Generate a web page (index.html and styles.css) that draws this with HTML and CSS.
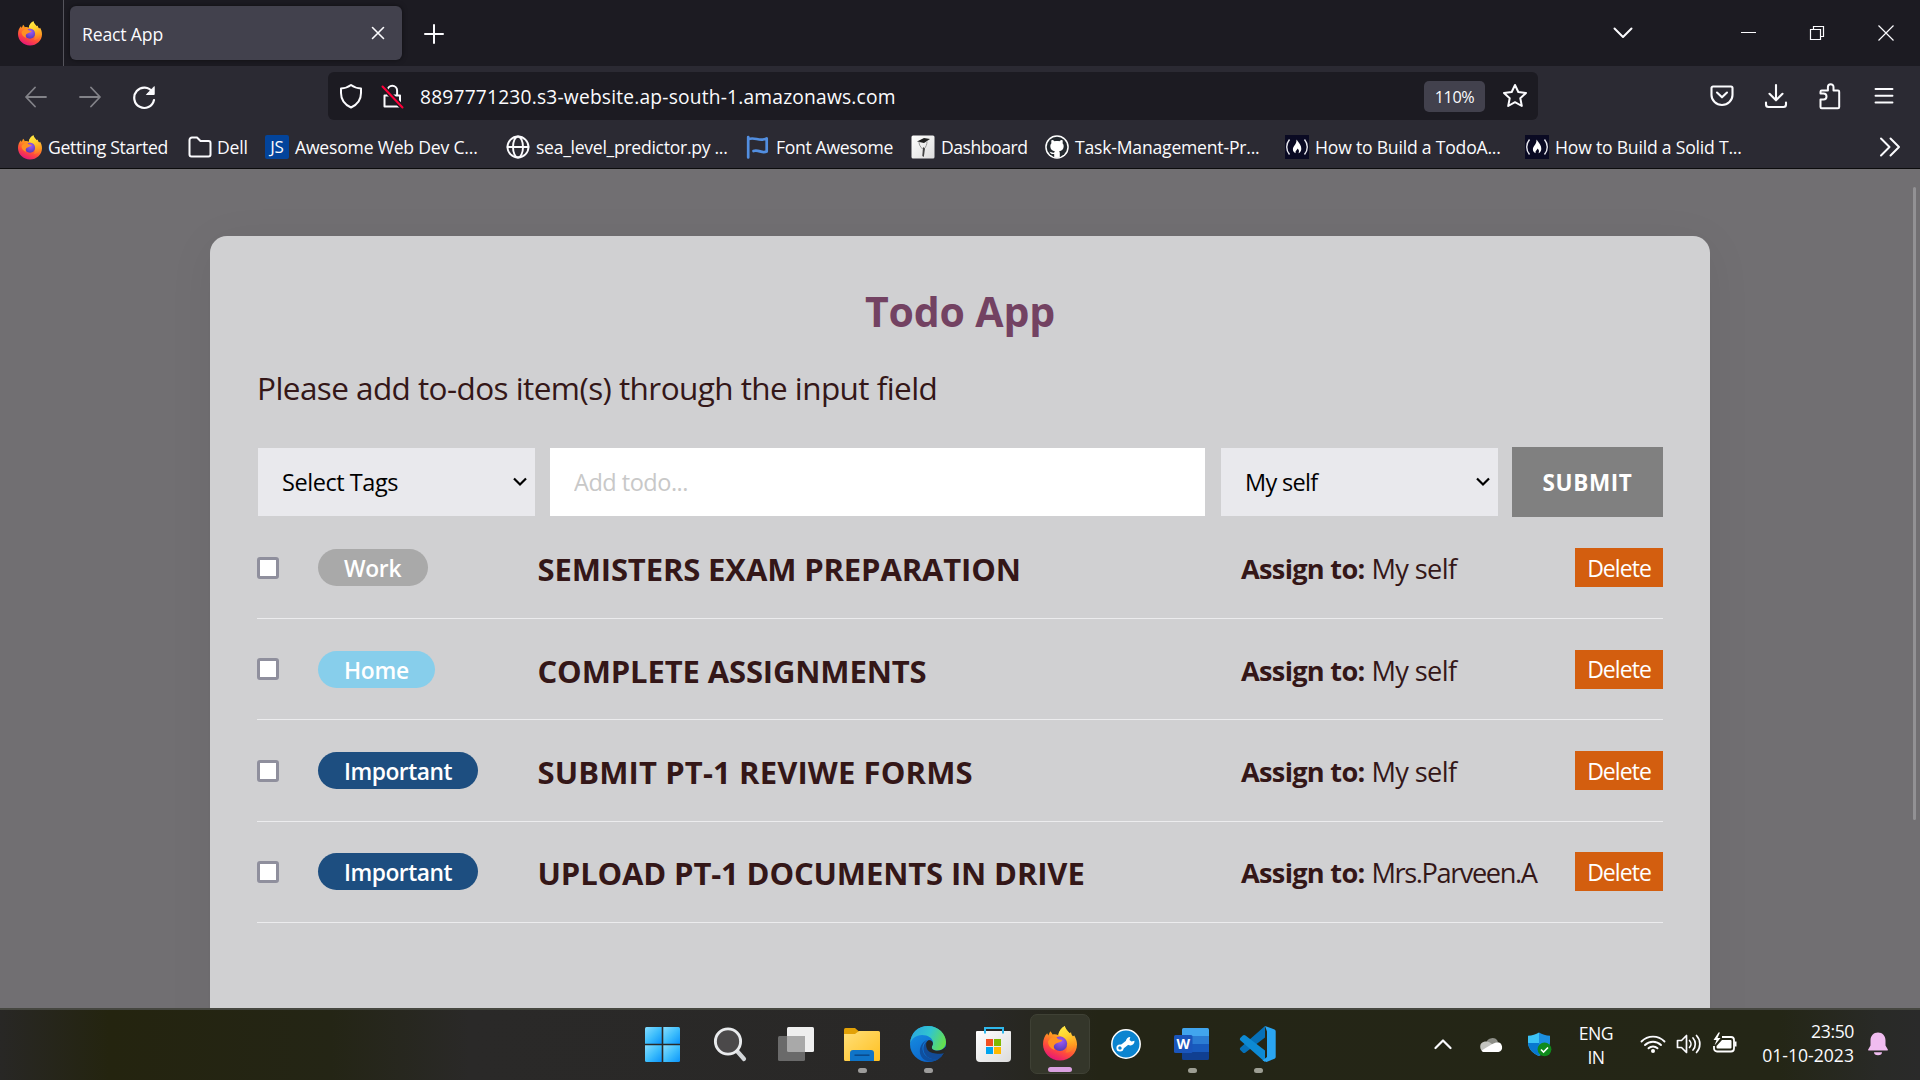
FILE: index.html
```html
<!DOCTYPE html>
<html lang="en">
<head>
<meta charset="utf-8">
<title>React App</title>
<link rel="stylesheet" href="styles.css">
</head>
<body>
<svg class="defs" width="0" height="0" aria-hidden="true">
  <defs>
    <linearGradient id="ffBody" x1=".8" y1="0" x2=".35" y2="1"><stop offset="0" stop-color="#ffe14a"/><stop offset=".4" stop-color="#ff9a1f"/><stop offset=".72" stop-color="#ff4a3d"/><stop offset="1" stop-color="#e6157a"/></linearGradient>
    <linearGradient id="ffFlame" x1="0" y1="0" x2=".3" y2="1"><stop offset="0" stop-color="#fff04a"/><stop offset=".5" stop-color="#ffd02c"/><stop offset="1" stop-color="#ff9a1f" stop-opacity=".4"/></linearGradient>
    <radialGradient id="ffCore" cx=".55" cy=".3" r=".75"><stop offset="0" stop-color="#a35cf5"/><stop offset="1" stop-color="#5038b4"/></radialGradient>
    <linearGradient id="win" x1="0" y1="0" x2="1" y2="1"><stop offset="0" stop-color="#85dcff"/><stop offset=".5" stop-color="#40bffc"/><stop offset="1" stop-color="#0a94fb"/></linearGradient>
    <linearGradient id="folderG" x1="0" y1="0" x2="1" y2="1"><stop offset="0" stop-color="#ffdf78"/><stop offset="1" stop-color="#ffc021"/></linearGradient>
    <linearGradient id="edgeTop" x1="0" y1=".3" x2="1" y2=".6"><stop offset="0" stop-color="#2aa7e0"/><stop offset=".5" stop-color="#31c5cf"/><stop offset="1" stop-color="#66e04a"/></linearGradient>
    <linearGradient id="edgeBody" x1="0" y1="0" x2=".6" y2="1"><stop offset="0" stop-color="#1795e6"/><stop offset="1" stop-color="#0c62c9"/></linearGradient>
    <linearGradient id="paper" x1="0" y1="0" x2="1" y2="1"><stop offset="0" stop-color="#fff"/><stop offset="1" stop-color="#dcdcdc"/></linearGradient>
    <linearGradient id="shieldG" x1="0" y1="0" x2="1" y2="0"><stop offset=".5" stop-color="#3cc3f5"/><stop offset=".5" stop-color="#1c8fe0"/></linearGradient>
    <symbol id="firefox" viewBox="0 0 34 35">
      <path d="M17 34.500C7.600 34.500 0 27.300 0 18.300C0 13.500 1.600 9.700 4.200 7.200L5.300 9.600L7.200 5.200C8.300 6.200 9 7.300 9.600 8.600C11.500 8 13.500 8.200 15.300 9.200C15.800 5.600 18 2 21.800 0C22.300 3.400 24.500 5 26.500 7.200L28 6.200C28.300 8 28.800 9.200 30 10.300L31.300 9.500C33 12.300 34 15.400 34 18.500C34 27.300 26.400 34.500 17 34.500Z" fill="url(#ffBody)"/>
      <path d="M15.300 9.200C15.800 5.600 18 2 21.800 0C22.300 5 31.500 8.500 31.200 18C31 23.500 27 27 22.500 26.500C26 21 24.500 12 15.300 9.200Z" fill="url(#ffFlame)"/>
      <circle cx="17" cy="17.800" r="7.200" fill="url(#ffCore)"/>
      <path d="M5 15.500C7 12 10 10.600 13.500 11.200C14.500 13.400 16.500 13.800 19.400 14C18.500 16 16 16 14.200 17C10.500 18.300 10 21 12 24C7.500 22.800 5 19.500 5 15.500Z" fill="#ff9123"/>
    </symbol>
    <symbol id="fcc" viewBox="0 0 24 24">
      <rect width="24" height="24" fill="#0a0a23"/>
      <path d="M4.500 4.500C.8 9 .8 15 4.500 19.500M19.500 4.500C23.200 9 23.200 15 19.500 19.500" fill="none" stroke="#e8e8ee" stroke-width="1.400"/>
      <path d="M11.500 4.500C14 8 16.500 10.500 16.300 14C16.200 16.200 15 17.700 13.500 18.300C14.500 16.300 14 14.700 12.500 13.500C12.300 15.300 10 15.500 10.700 18.300C8.700 17.500 7.800 16 7.900 14C8 11 11.700 9.500 11.500 4.500Z" fill="#fff"/>
    </symbol>
  </defs>
</svg>

<div class="screen">
  <header class="tabbar">
    <div class="pinned"><svg width="24" height="25"><use href="#firefox"/></svg></div>
    <div class="tab">
      <span class="tab-title">React App</span>
      <svg class="line" width="14" height="14" viewBox="0 0 14 14"><path d="M1.500 1.500l11 11M12.500 1.500l-11 11"/></svg>
    </div>
    <svg class="line newtab" width="20" height="20" viewBox="0 0 20 20"><path d="M10 1v18M1 10h18" stroke-width="2"/></svg>
    <div class="winctl">
      <svg class="line" width="20" height="12" viewBox="0 0 20 12"><path d="M1.500 1.500L10 10l8.500-8.500" stroke-width="2"/></svg>
      <svg class="line sharp" width="16" height="16" viewBox="0 0 16 16"><path d="M0 7.500h15" stroke-width="1"/></svg>
      <svg class="line sharp" width="16" height="16" viewBox="0 0 16 16"><path d="M1.500 4.500h10v10h-10zM4.500 4V1.500h10v10H12" stroke-width="1.200"/></svg>
      <svg class="line sharp" width="18" height="18" viewBox="0 0 18 18"><path d="M1.500 1.500l15 15M16.500 1.500l-15 15" stroke-width="1.200"/></svg>
    </div>
  </header>

  <nav class="toolbar">
    <button class="tool dim"><svg class="line" width="24" height="24" viewBox="0 0 24 24"><path d="M22 13H2.500M11 3.500L2 13l9 9.500" stroke-width="1.800"/></svg></button>
    <button class="tool dim"><svg class="line" width="24" height="24" viewBox="0 0 24 24"><path d="M2 13h19.500M13 3.500l9 9.500-9 9.500" stroke-width="1.800"/></svg></button>
    <button class="tool"><svg class="line reload" width="26" height="26" viewBox="0 0 26 26"><path d="M21.500 8A10 10.200 0 1 0 23 16" stroke-width="2.200"/><path d="M23.200 3v7.500H15.800z" fill="#fbfbfe" stroke-width="1"/></svg></button>
    <div class="urlbar">
      <svg class="line" width="24" height="26" viewBox="0 0 24 26"><path d="M12 2C9 4.300 5.500 5.300 2 5.500V10C2 17 6.500 22 12 24.500C17.500 22 22 17 22 10V5.500C18.500 5.300 15 4.300 12 2Z" stroke-width="2"/></svg>
      <svg class="line lock" width="24" height="26" viewBox="0 0 24 26"><path d="M3.500 12.500h15.500v11H3.500zM6.500 12V7.500a4.800 4.800 0 0 1 9.600 0V12" stroke-width="2"/><path d="M1.500 3.500l20 21" stroke="#1c1b22" stroke-width="5"/><path d="M1.500 3.500l20 21" stroke="#ff0039" stroke-width="2"/></svg>
      <span class="url">8897771230.s3-website.ap-south-1.amazonaws.com</span>
      <span class="zoom">110%</span>
      <svg class="line" width="26" height="26" viewBox="0 0 26 26"><path d="M13 2l3.300 7 7.700.9-5.700 5.300 1.500 7.800L13 19.200 6.200 23l1.500-7.800L2 9.900 9.700 9z" stroke-width="2"/></svg>
    </div>
    <div class="tools-right">
      <button class="tool"><svg class="line" width="24" height="22" viewBox="0 0 24 22"><path d="M3 1.500h18a1.500 1.500 0 0 1 1.500 1.500v7a10.500 10 0 0 1-21 0V3A1.500 1.500 0 0 1 3 1.500zM7 7.500l5 4.800 5-4.800" stroke-width="2.100"/></svg></button>
      <button class="tool"><svg class="line" width="24" height="26" viewBox="0 0 24 26"><path d="M12 2v15M5.500 10.800L12 17.300l6.500-6.500M2 19.500v2a2.500 2.500 0 0 0 2.500 2.500h15a2.500 2.500 0 0 0 2.500-2.500v-2" stroke-width="2.100"/></svg></button>
      <button class="tool"><svg class="line" width="24" height="28" viewBox="0 0 24 28"><path d="M2.500 17.500v7.500a1.200 1.200 0 0 0 1.200 1.200H20a1.200 1.200 0 0 0 1.200-1.200V9.700A1.200 1.200 0 0 0 20 8.500H15.500V5a2.800 2.800 0 0 0-5.600 0v3.500H3.700A1.200 1.200 0 0 0 2.500 9.700V11.500H5.500a3 3 0 0 1 0 6z" stroke-width="2"/></svg></button>
      <button class="tool"><svg class="line" width="20" height="18" viewBox="0 0 20 18"><path d="M1.500 2h17M1.500 8.700h17M1.500 15.500h17" stroke-width="1.900"/></svg></button>
    </div>
  </nav>

  <div class="bookmarks">
    <div class="bm"><svg width="24" height="25"><use href="#firefox"/></svg><span class="t1">Getting Started</span></div>
    <div class="bm"><svg class="line" width="24" height="24" viewBox="0 0 24 24"><path d="M4 2.500h5l3.500 3.500H20.500A2 2 0 0 1 22.500 8v11.500a2 2 0 0 1-2 2H3.500a2 2 0 0 1-2-2V5A2.500 2.500 0 0 1 4 2.500z" stroke-width="2"/></svg><span class="t2">Dell</span></div>
    <div class="bm"><span class="js">JS</span><span>Awesome Web Dev C...</span></div>
    <div class="bm"><svg class="line" width="24" height="24" viewBox="0 0 24 24"><circle cx="12" cy="12" r="10.500" stroke-width="1.900"/><ellipse cx="12" cy="12" rx="5" ry="10.500" stroke-width="1.900"/><path d="M1.500 12h21" stroke-width="1.900"/></svg><span class="t4">sea_level_predictor.py ...</span></div>
    <div class="bm"><svg width="24" height="24" viewBox="0 0 24 24" fill="none" stroke="#528ee0" stroke-width="2.700" stroke-linecap="round" stroke-linejoin="round"><path d="M2.200 2v20.500M2.500 4.200C8.500 1.500 13.500 7 20.700 3.500V16.500C16 19 12.500 14 7.500 16"/></svg><span class="t5">Font Awesome</span></div>
    <div class="bm"><svg width="24" height="24" viewBox="0 0 24 24"><rect x=".5" y=".5" width="23" height="23" rx="1.500" fill="url(#paper)"/><path d="M6 6.500l7-3.500 6 1-6 4z" fill="#222"/><path d="M8 6.500c0 4 1.500 5 3.500 7.500M16 6.500c0 3-1 5-2.500 7" fill="none" stroke="#999" stroke-width="1"/><path d="M12 12l2 1.500-1.200 8.500-1.500-1z" fill="#444"/></svg><span class="t6">Dashboard</span></div>
    <div class="bm"><svg width="24" height="24" viewBox="0 0 24 24"><circle cx="12" cy="12" r="11.800" fill="#fff"/><circle cx="12" cy="12" r="10.300" fill="#24292f"/><path d="M9.200 22V19C6 19.600 5.500 17.500 4.500 16.700C6.300 16.400 7 18.300 9.300 17.500C9.400 17 9.600 16.600 9.900 16.300C7.200 16 5.300 14.500 5.300 11.300C5.300 9.900 5.700 9 6.400 8.200C6.100 7 6.200 6 6.600 5C7.800 5 8.800 5.600 9.600 6.200C11.200 5.800 12.800 5.800 14.400 6.200C15.200 5.600 16.200 5 17.400 5C17.800 6 17.900 7 17.600 8.200C18.300 9 18.700 9.900 18.700 11.300C18.700 14.500 16.800 16 14.100 16.300C14.600 16.800 14.800 17.400 14.800 18.300V22C13 23 11 23 9.200 22Z" fill="#fff"/></svg><span>Task-Management-Pr...</span></div>
    <div class="bm"><svg width="24" height="24"><use href="#fcc"/></svg><span>How to Build a TodoA...</span></div>
    <div class="bm"><svg width="24" height="24"><use href="#fcc"/></svg><span>How to Build a Solid T...</span></div>
    <svg class="line more" width="22" height="20" viewBox="0 0 22 20"><path d="M2 1.500l8.500 8.500L2 18.500M11.500 1.500L20 10l-8.500 8.500" stroke-width="2"/></svg>
  </div>

  <main class="page">
    <section class="card">
      <h1>Todo App</h1>
      <p class="intro">Please add to-dos item(s) through the input field</p>
      <form class="form">
        <div class="select"><span>Select Tags</span><svg width="16" height="12" viewBox="0 0 16 12"><path d="M2 2.500l6 6 6-6"/></svg></div>
        <input class="field" type="text" placeholder="Add todo...">
        <div class="select second"><span class="self">My self</span><svg width="16" height="12" viewBox="0 0 16 12"><path d="M2 2.500l6 6 6-6"/></svg></div>
        <button class="submit" type="button">SUBMIT</button>
      </form>
      <ul class="todos">
        <li><i class="check"></i><span class="tag work">Work</span><span class="name">SEMISTERS EXAM PREPARATION</span><span class="assign"><b>Assign to:</b><span>My self</span></span><button class="delete">Delete</button></li>
        <li><i class="check"></i><span class="tag home">Home</span><span class="name">COMPLETE ASSIGNMENTS</span><span class="assign"><b>Assign to:</b><span>My self</span></span><button class="delete">Delete</button></li>
        <li><i class="check"></i><span class="tag important">Important</span><span class="name wide">SUBMIT PT-1 REVIWE FORMS</span><span class="assign"><b>Assign to:</b><span>My self</span></span><button class="delete">Delete</button></li>
        <li><i class="check"></i><span class="tag important">Important</span><span class="name">UPLOAD PT-1 DOCUMENTS IN DRIVE</span><span class="assign"><b>Assign to:</b><span class="long">Mrs.Parveen.A</span></span><button class="delete">Delete</button></li>
      </ul>
    </section>
    <div class="scrollbar"></div>
  </main>

  <footer class="taskbar">
    <div class="apps">
      <svg viewBox="0 0 66 70"><g fill="url(#win)"><path d="M14 18.500a1.500 1.500 0 0 1 1.500-1.500H30.700v16.700H14z"/><path d="M32.300 17H47.500a1.500 1.500 0 0 1 1.500 1.500V33.700H32.300z"/><path d="M14 35.300h16.700V52H15.500a1.500 1.500 0 0 1-1.500-1.500z"/><path d="M32.300 35.300H49V50.500a1.500 1.500 0 0 1-1.500 1.500H32.300z"/></g></svg>
      <svg viewBox="0 0 66 70"><path d="M40 41l7 8" stroke="#d3d6d9" stroke-width="4.200" stroke-linecap="round"/><circle cx="31" cy="31.500" r="12.600" fill="#4b494a" stroke="#e9ebed" stroke-width="2.900"/></svg>
      <svg viewBox="-1 0 66 70"><rect x="23" y="17" width="27" height="25" rx="1.500" fill="#efefef"/><rect x="14" y="26" width="27" height="25" rx="1.500" fill="#6a6a6a"/><path d="M23 26h18v16H24.500a1.500 1.500 0 0 1-1.500-1.500z" fill="#a9a9a9"/></svg>
      <svg viewBox="-2 0 66 70"><path d="M13 19.500a1.500 1.500 0 0 1 1.500-1.500H24l4 3.500-4 4.500H13z" fill="#e2a106"/><path d="M13 24h11l4-3H47.500a1.500 1.500 0 0 1 1.500 1.500V49.500a1.500 1.500 0 0 1-1.500 1.500h-33a1.500 1.500 0 0 1-1.500-1.500z" fill="url(#folderG)"/><path d="M19 51V43a3 3 0 0 1 3-3H40a3 3 0 0 1 3 3v8z" fill="#0f74c8"/><path d="M23.500 45.200h15" stroke="#0a4a8c" stroke-width="1.600"/><rect x="27" y="58" width="9" height="5" rx="2.500" fill="#9d9c9b"/></svg>
      <svg viewBox="-2 0 66 70"><circle cx="31" cy="34" r="18" fill="url(#edgeBody)"/><path d="M13 34C14 22 21 16 31 16C41.500 16 49 24 49 32C49 38 44.500 40.500 40 40.500C36 40.500 34 38.800 34.500 37C35.200 35.500 36 34.500 36 32.500C36 28.500 31 25 25 25C19 25 14.500 28.500 13 34Z" fill="url(#edgeTop)"/><path d="M30.500 30C26 32.500 24.500 37 26 41.500C28 48 36 51 43 48C37 53.500 27.500 52.500 24 46C20.800 39.500 24.500 31.500 30.500 30Z" fill="#0f4f9e"/><path d="M34.300 37C34 39 36 41 40 41C44 41 46 39.500 48 38C47.500 43 45 46.500 42.500 48.300C35 51 27.500 47 26.500 40C26 34 29.500 30.500 33 30C36 31 36 34.500 34.300 37Z" fill="#124b96"/><path d="M31 30.500C34.500 29 37 32.500 35.500 35.300C34 38 35 40.500 40 40.700C43.500 40.700 46 39.500 49.500 36L47.500 43C44 44.500 34 44 31 40.500C28.500 37 28.500 32 31 30.500Z" fill="#262726"/><rect x="27" y="58" width="9" height="5" rx="2.500" fill="#9d9c9b"/></svg>
      <svg viewBox="0 0 66 70"><path d="M24 24v-6H42v6" fill="none" stroke="#2fb8ec" stroke-width="2"/><path d="M15 22a1 1 0 0 1 1-1H49a1 1 0 0 1 1 1V48a4 4 0 0 1-4 4H19a4 4 0 0 1-4-4z" fill="url(#paper)"/><path d="M24 21v2.500M42 21v2.500" stroke="#2fb8ec" stroke-width="2"/><path d="M25 29h7v7h-7z" fill="#f25022"/><path d="M33 29h7v7h-7z" fill="#7fba00"/><path d="M25 37h7v7h-7z" fill="#00a4ef"/><path d="M33 37h7v7h-7z" fill="#ffb900"/></svg>
      <div class="active"><svg width="34" height="35"><use href="#firefox"/></svg></div>
      <svg viewBox="0 0 66 70"><circle cx="33" cy="34" r="14.200" fill="#0b84d0" stroke="#fff" stroke-width="1.500"/><path d="M28.500 37.300L36 31.200" stroke="#fff" stroke-width="4.600"/><circle cx="27" cy="38" r="2.700" fill="none" stroke="#fff" stroke-width="1.800"/><path d="M41.500 30.800a4.300 4.300 0 1 1-4.200-3.900L36.500 30l2 1.500z" fill="#fff"/></svg>
      <svg viewBox="2 0 66 70"><path d="M25 19.500a1.500 1.500 0 0 1 1.500-1.500h24a1.500 1.500 0 0 1 1.500 1.500V26H25z" fill="#41a5ee"/><path d="M25 26h27v8H25z" fill="#2b7cd3"/><path d="M25 34h27v8H25z" fill="#185abd"/><path d="M25 42h27v6.500a1.500 1.500 0 0 1-1.500 1.500h-24a1.500 1.500 0 0 1-1.500-1.500z" fill="#103f91"/><rect x="17" y="25" width="18.500" height="18" rx="1.500" fill="#1a55bb"/><text x="26.200" y="38.700" text-anchor="middle" class="wletter">W</text><rect x="31" y="58" width="9" height="5" rx="2.500" fill="#9d9e93"/></svg>
      <svg viewBox="0 0 66 70"><path d="M40 16v11.500L20.500 42.500C19.500 43.300 18.500 43.200 17.800 42.500L15.500 40.300C14.600 39.400 14.600 38.400 15.500 37.500z" fill="#0670b8"/><path d="M40 52V40.500L20.500 25.500C19.500 24.700 18.500 24.800 17.800 25.500L15.500 27.700C14.600 28.600 14.600 29.600 15.500 30.500z" fill="#0d8ad4"/><path d="M40 16l9.500 3.500a1.800 1.800 0 0 1 1.200 1.700V47a1.800 1.800 0 0 1-1.200 1.700L41.500 52L37.500 50.500L42 47V21.500z" fill="#2aa5f2"/><rect x="29" y="58" width="9" height="5" rx="2.500" fill="#9d9e93"/></svg>
    </div>
    <div class="tray">
      <svg class="line chev" width="18" height="12" viewBox="0 0 18 12"><path d="M1.500 10L9 2.500 16.500 10" stroke-width="2.200"/></svg>
      <svg class="cloud" width="24" height="16" viewBox="0 0 24 16"><path d="M7 7A6.500 6.500 0 0 1 19 5.500L13 10z" fill="#8e8f88"/><path d="M5 15.500A5 5 0 0 1 5 5.800C8 4.500 12 6.500 14 9L8 15.500z" fill="#c3c4bf"/><path d="M2.500 14.500C7 12 14 7 18 6.200A5 5 0 0 1 19.500 16H5.500C4 16 3 15.500 2.500 14.500z" fill="#fff"/></svg>
      <svg class="shield" width="24" height="25" viewBox="0 0 24 25"><path d="M11 .5C14 2.500 18 3.500 22 3.800V10C22 17 17 21.500 11 24C5 21.500 0 17 0 10V3.800C4 3.500 8 2.500 11 .5Z" fill="url(#shieldG)"/><path d="M0 11H11V24C5 21.500 .5 17.500 0 11Z" fill="#0878d0"/><circle cx="16.500" cy="17.300" r="6.900" fill="#0f8a1c"/><path d="M13 17.500l2.500 2.500 4.500-4.500" fill="none" stroke="#fff" stroke-width="1.600"/></svg>
      <div class="lang"><span>ENG</span><span>IN</span></div>
      <svg class="line wifi" width="26" height="20" viewBox="0 0 26 20"><path d="M1.500 7.500a16 16 0 0 1 23 0M5 11a11.300 11.300 0 0 1 16 0M8.500 14.300a6.500 6.500 0 0 1 9 0" stroke-width="1.900"/><circle cx="13" cy="17" r="2" fill="#fff" stroke="none"/></svg>
      <svg class="line vol" width="26" height="20" viewBox="0 0 26 20"><path d="M1.500 6.500h4l5-5v17l-5-5h-4zM13.500 6.500a5 5 0 0 1 0 7M17 4a9 9 0 0 1 0 12M20.500 1.500a12.500 12.500 0 0 1 0 17" stroke-width="1.700"/></svg>
      <svg class="batt" width="26" height="22" viewBox="0 0 26 22"><path d="M10 5H19a3 3 0 0 1 3 3v8.500a3 3 0 0 1-3 3H5a3 3 0 0 1-3-3V14" fill="none" stroke="#fff" stroke-width="1.800"/><path d="M10 8h8.500a1 1 0 0 1 1 1v6.500a1 1 0 0 1-1 1H5.500a1 1 0 0 1-1-1V14z" fill="#fff"/><path d="M22.500 9.500h2v5h-2z" fill="#fff"/><path d="M6.500.5L1.500 8h3L2.500 13.500 8.500 6H5.500L8 .5z" fill="#fff"/></svg>
      <div class="clock"><span class="time">23:50</span><span>01-10-2023</span></div>
      <svg class="bell" width="22" height="24" viewBox="0 0 22 24"><path d="M11 .5C15.500.5 18.500 4 18.500 8.500V13.500L20.700 17.300A.8.8 0 0 1 20 18.600H2A.8.8 0 0 1 1.300 17.300L3.500 13.500V8.500C3.500 4 6.500.5 11 .5Z" fill="#f0bcf0"/><path d="M7 20.300h8A4 3 0 0 1 7 20.300z" fill="#f0bcf0"/></svg>
    </div>
  </footer>
</div>
</body>
</html>
```
FILE: styles.css
```css
* { box-sizing: border-box; }
body { margin: 0; overflow: hidden; font-family: "Open Sans", "Noto Sans", sans-serif; }
button, input { font-family: inherit; border: 0; padding: 0; margin: 0; background: none; color: inherit; border-radius: 0; }
svg { display: block; flex: none; }
.defs { position: absolute; }
.line { fill: none; stroke: #fbfbfe; stroke-width: 1.6; stroke-linecap: round; stroke-linejoin: round; }
.sharp { stroke-linecap: butt; stroke-linejoin: miter; }

.screen { width: 1920px; height: 1080px; display: grid; grid-template-rows: 66px 60px 43px 839px 72px; color: #fbfbfe; white-space: nowrap; }

/* Tab strip */
.tabbar { background: #1c1b22; display: flex; align-items: center; }
.pinned { width: 64px; height: 66px; border-right: 1px solid #55545c; display: flex; align-items: center; padding-left: 18px; }
.tab { margin-left: 6px; width: 332px; height: 54px; border-radius: 6px; background: #42414d; box-shadow: 0 0 5px rgba(0,0,0,.5); display: flex; align-items: center; justify-content: space-between; padding: 0 17px 0 12px; font-size: 17.6px; letter-spacing: -.16px; }
.tab-title { padding-top: 1px; }
.newtab { margin: 1px 0 0 22px; }
.winctl { margin-left: auto; display: flex; align-items: center; padding-right: 25px; }
.winctl svg:nth-child(2) { margin-left: 108px; }
.winctl svg:nth-child(3) { margin-left: 52px; }
.winctl svg:nth-child(4) { margin-left: 52px; }

/* Navigation */
.toolbar { background: #2b2a33; display: flex; align-items: center; padding: 0 9px; }
.tool { width: 54px; height: 48px; display: flex; align-items: center; justify-content: center; }
.reload { margin-top: 2px; }
.dim { opacity: .42; }
.urlbar { margin-left: 157px; width: 1210px; height: 48px; border-radius: 6px; background: #1c1b22; display: flex; align-items: center; padding: 0 10px 0 11px; }
.lock { margin-left: 18px; }
.url { margin-left: 15px; padding-top: 2px; font-size: 19.2px; letter-spacing: .2px; line-height: 26px; }
.zoom { margin-left: auto; margin-right: 17px; width: 61px; height: 31px; border-radius: 5px; background: #42414d; font-size: 16.2px; letter-spacing: -.4px; line-height: 32px; text-align: center; }
.tools-right { margin-left: auto; display: flex; }

/* Bookmarks */
.bookmarks { background: #2b2a33; border-bottom: 1px solid #0c0c0d; display: grid; grid-template-columns: 170px 77px 241px 240px 165px 134px 240px 240px 354px 22px; align-items: center; padding-left: 18px; font-size: 17.6px; letter-spacing: -.21px; }
.bm { display: flex; align-items: center; gap: 6px; }
.js { width: 24px; height: 24px; border-radius: 2px; background: #03449b; text-align: center; line-height: 24px; font-size: 17px; }
.t1, .t4 { letter-spacing: -.29px; }
.t2 { margin-left: -1px; }
.t5 { letter-spacing: -.34px; }
.t6 { letter-spacing: -.48px; }

/* Page */
.page { background: #716f72; display: flex; justify-content: center; overflow: hidden; padding-top: 67px; position: relative; }
.scrollbar { position: absolute; right: 4px; top: 18px; width: 3px; height: 633px; border-radius: 2px; background: #929194; }
.card { width: 1500px; height: 860px; border-radius: 17px; background: #d0d0d2; box-shadow: 0 8px 48px rgba(0,0,0,.06); padding: 47px 47px 0; color: #341718; }
h1 { margin: 0; font-size: 41px; line-height: 56px; font-weight: 700; letter-spacing: -.16px; color: #734262; text-align: center; }
.intro { margin: 27px 0 37px; font-size: 31.5px; line-height: 44px; letter-spacing: -.57px; }
.form { display: grid; grid-template-columns: 277px 655px 278px 151px; gap: 0 15px; align-items: center; height: 70px; padding-left: 1px; }
.form > :nth-child(4) { margin-left: -1px; width: 151px; }
.select { height: 68px; background: #e9e9ed; color: #000; display: flex; align-items: center; justify-content: space-between; padding: 0 7px 0 24px; font-size: 23.5px; letter-spacing: -.45px; }
.select.second { margin-left: 1px; }
.select .self { letter-spacing: -.7px; }
.select svg { fill: none; stroke: #000; stroke-width: 2.2; }
.field { height: 68px; background: #fff; padding: 0 24px; font-size: 23.5px; letter-spacing: -.48px; }
.field::placeholder { color: #c8c8c8; opacity: 1; }
.submit { height: 70px; background: #808080; color: #fff; font-size: 22.5px; font-weight: 700; letter-spacing: .65px; }

.todos { list-style: none; margin: .7px 0 0; padding: 0; }
.todos li { height: 101.33px; border-bottom: 1px solid #ececee; display: grid; grid-template-columns: 61px 220px 703px 1fr auto; align-items: center; }
.check { width: 22px; height: 22px; border: 3px solid #8f8f9d; border-radius: 3px; background: #fff; }
.tag { justify-self: start; height: 37px; line-height: 39.5px; border-radius: 19px; padding: 0 26px; color: #fff; font-size: 22.8px; font-weight: 600; letter-spacing: -.3px; }
.important { letter-spacing: -.49px; }
.work { background: #a9a9a9; padding-right: 27px; }
.home { background: #87ceeb; }
.important { background: #1d4e80; }
.name { font-size: 31px; font-weight: 700; letter-spacing: -.13px; line-height: 42px; padding-top: 3px; margin-left: -.5px; }
.wide { letter-spacing: .13px; }
.assign { display: flex; gap: 7px; font-size: 27.2px; letter-spacing: -.65px; padding-top: 2px; }
.assign b { letter-spacing: -.72px; }
.assign .long { letter-spacing: -1.42px; }
.delete { width: 88px; height: 39px; background: #d35e0f; color: #fff; font-size: 23px; letter-spacing: -.95px; }

/* Taskbar */
.taskbar { border-top: 2px solid #464740; background: linear-gradient(90deg, #282725 0, #24240f 110px, #242515 330px, #2a2928 470px, #292827 980px, #242516 1100px, #242616 1780px, #292a27 1880px, #2a2a2a); display: flex; padding-left: 631px; }
.apps { display: flex; }
.apps > svg { width: 66px; height: 70px; }
.active { width: 60px; height: 60px; margin: 4px 3px 0; padding: 11px 0 0 12px; border-radius: 7px; background: #34362a; border: 1px solid #3f4135; position: relative; }
.active::after { content: ""; position: absolute; left: 17px; bottom: 1px; width: 24px; height: 5px; border-radius: 3px; background: #d9a0e0; }
.wletter { font: 700 14px "Open Sans", sans-serif; fill: #fff; }
.tray { display: flex; align-items: center; height: 68px; margin-left: 143px; font-size: 17.6px; line-height: 24px; }
.tray span { display: block; }
.cloud { margin-left: 27px; }
.shield { margin-left: 25px; }
.lang { width: 36px; margin-left: 26px; text-align: center; letter-spacing: -.5px; padding-top: 1px; }
.wifi { margin-left: 26px; }
.vol { margin-left: 10px; }
.batt { margin-left: 10px; margin-top: -3px; }
.clock { width: 116px; text-align: right; margin-top: -3px; }
.time { letter-spacing: -.38px; }
.bell { margin-left: 13px; }
```
